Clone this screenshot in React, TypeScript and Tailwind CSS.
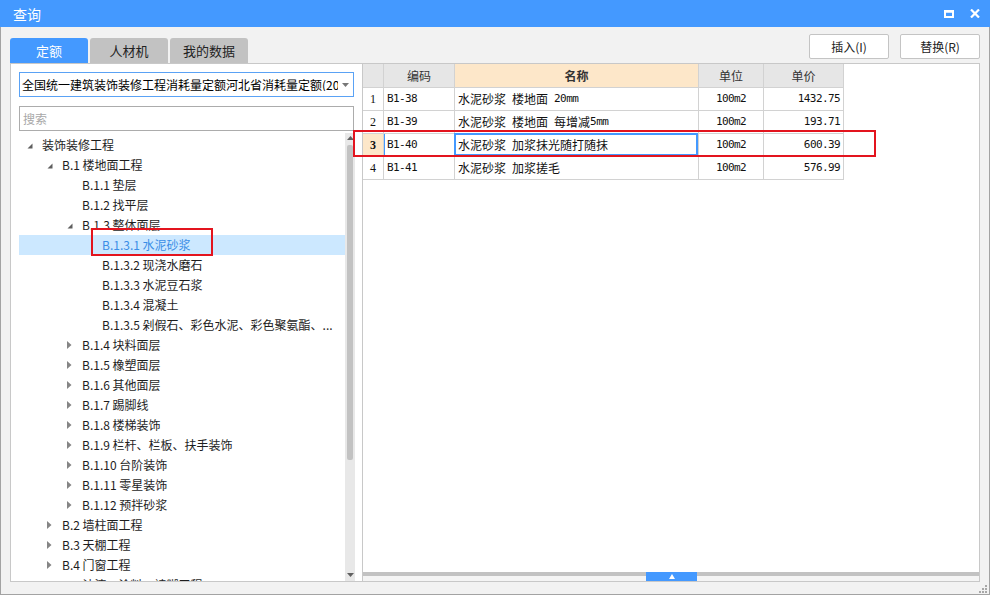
import React from "react";

type Node = { l: number; t: string; a?: "open" | "closed"; sel?: boolean };

const tree: Node[] = [
  { l: 0, t: "装饰装修工程", a: "open" },
  { l: 1, t: "B.1 楼地面工程", a: "open" },
  { l: 2, t: "B.1.1 垫层" },
  { l: 2, t: "B.1.2 找平层" },
  { l: 2, t: "B.1.3 整体面层", a: "open" },
  { l: 3, t: "B.1.3.1 水泥砂浆", sel: true },
  { l: 3, t: "B.1.3.2 现浇水磨石" },
  { l: 3, t: "B.1.3.3 水泥豆石浆" },
  { l: 3, t: "B.1.3.4 混凝土" },
  { l: 3, t: "B.1.3.5 剁假石、彩色水泥、彩色聚氨酯、..." },
  { l: 2, t: "B.1.4 块料面层", a: "closed" },
  { l: 2, t: "B.1.5 橡塑面层", a: "closed" },
  { l: 2, t: "B.1.6 其他面层", a: "closed" },
  { l: 2, t: "B.1.7 踢脚线", a: "closed" },
  { l: 2, t: "B.1.8 楼梯装饰", a: "closed" },
  { l: 2, t: "B.1.9 栏杆、栏板、扶手装饰", a: "closed" },
  { l: 2, t: "B.1.10 台阶装饰", a: "closed" },
  { l: 2, t: "B.1.11 零星装饰", a: "closed" },
  { l: 2, t: "B.1.12 预拌砂浆", a: "closed" },
  { l: 1, t: "B.2 墙柱面工程", a: "closed" },
  { l: 1, t: "B.3 天棚工程", a: "closed" },
  { l: 1, t: "B.4 门窗工程", a: "closed" },
  { l: 1, t: "B.5 油漆、涂料、裱糊工程", a: "closed" },
];

const rows = [
  { n: "1", c: "B1-38", name: "水泥砂浆 楼地面 20mm", u: "100m2", p: "1432.75" },
  { n: "2", c: "B1-39", name: "水泥砂浆 楼地面 每增减5mm", u: "100m2", p: "193.71" },
  { n: "3", c: "B1-40", name: "水泥砂浆 加浆抹光随打随抹", u: "100m2", p: "600.39", sel: true },
  { n: "4", c: "B1-41", name: "水泥砂浆 加浆搓毛", u: "100m2", p: "576.99" },
];

const padL = ["pl-[8px]", "pl-[28px]", "pl-[48px]", "pl-[68px]"];

function Mixed({ text }: { text: string }) {
  const parts = text.split(/([\u4e00-\u9fff]+)/).filter(Boolean);
  return (
    <>
      {parts.map((p, i) =>
        /[\u4e00-\u9fff]/.test(p) ? (
          <span key={i} className="font-['Noto_Sans_CJK_SC',sans-serif] text-[12px]">
            {p}
          </span>
        ) : (
          <span key={i} className="font-['DejaVu_Sans_Mono',monospace] text-[11px] tracking-[-0.6px] whitespace-pre">
            {p}
          </span>
        )
      )}
    </>
  );
}

function Arrow({ a }: { a?: "open" | "closed" }) {
  if (a === "open")
    return (
      <svg width="6" height="6" viewBox="0 0 6 6" className="mt-[1px]">
        <polygon points="5.5,0.5 5.5,5.5 0.5,5.5" fill="#5e5e5e" />
      </svg>
    );
  if (a === "closed")
    return (
      <svg width="5" height="8" viewBox="0 0 5 8">
        <polygon points="0,0 4.5,4 0,8" fill="#858585" />
      </svg>
    );
  return null;
}

export default function App() {
  return (
    <div className="relative w-[993px] h-[601px] bg-white overflow-hidden font-['Noto_Sans_CJK_SC',sans-serif] text-[12px] text-[#1e1e1e]">
      <div className="w-[990px] h-[595px] flex flex-col">
        {/* title bar */}
        <div className="h-[27px] bg-[#4499ff] flex items-center justify-between pl-[13px] pr-[10px] shrink-0">
          <span className="text-white text-[14px] leading-none">查询</span>
          <div className="flex items-center gap-[16px]">
            <svg width="10" height="8" viewBox="0 0 10 8">
              <rect x="1" y="1.5" width="8" height="5.5" fill="none" stroke="white" strokeWidth="2" />
              <rect x="0" y="0" width="10" height="2.5" fill="white" />
            </svg>
            <svg width="10" height="9" viewBox="0 0 10 9">
              <path d="M1 0.5 L9 8.5 M9 0.5 L1 8.5" stroke="white" strokeWidth="2.2" />
            </svg>
          </div>
        </div>

        {/* body */}
        <div className="flex-1 bg-[#f2f2f2] border-l border-r border-b border-[#a3a3a3] px-[9px] flex flex-col">
          {/* top row */}
          <div className="h-[36px] flex justify-between shrink-0">
            <div className="flex gap-[2px] mt-[11px]">
              <div className="w-[78px] h-[25px] rounded-t-[3px] bg-[#4499ff] text-white flex items-center justify-center text-[13px]">
                定额
              </div>
              <div className="w-[78px] h-[25px] rounded-t-[3px] bg-[#c2c2c2] text-[#222] flex items-center justify-center text-[13px]">
                人材机
              </div>
              <div className="w-[78px] h-[25px] rounded-t-[3px] bg-[#c2c2c2] text-[#222] flex items-center justify-center text-[13px]">
                我的数据
              </div>
            </div>
            <div className="flex gap-[11px] mt-[7px]">
              <div className="w-[80px] h-[25px] bg-white border border-[#c4c4c4] rounded-[2px] flex items-center justify-center text-[12px] text-[#222]">
                插入(I)
              </div>
              <div className="w-[80px] h-[25px] bg-white border border-[#c4c4c4] rounded-[2px] flex items-center justify-center text-[12px] text-[#222]">
                替换(R)
              </div>
            </div>
          </div>

          {/* panels */}
          <div className="h-[519px] flex shrink-0">
            {/* left panel */}
            <div className="w-[352px] h-full bg-white border-l border-t border-b border-[#c8c8c8] pl-[8px] pr-[7px] flex flex-col">
              <div className="mt-[8px] w-[335px] h-[25px] border border-[#5aa2f5] flex items-center pl-[2px] pr-[4px] shrink-0">
                <div className="w-[316px] overflow-hidden whitespace-nowrap text-[12px] text-black leading-none">
                  全国统一建筑装饰装修工程消耗量定额河北省消耗量定额(2012)
                </div>
                <div className="flex-1 flex justify-end">
                  <svg width="7" height="4" viewBox="0 0 7 4">
                    <polygon points="0,0 7,0 3.5,4" fill="#777" />
                  </svg>
                </div>
              </div>
              <div className="mt-[9px] w-[335px] h-[25px] border border-[#acacac] flex items-center pl-[3px] shrink-0 text-[12px] text-[#a8a8a8]">
                搜索
              </div>
              <div className="mt-[2px] flex-1 flex overflow-hidden">
                <div className="w-[326px] pt-[2px] overflow-hidden">
                  {tree.map((n, i) => (
                    <div
                      key={i}
                      className={`h-[20px] flex items-center whitespace-nowrap ${padL[n.l]} ${
                        n.sel ? "bg-[#cce8ff] text-[#3a8ee6]" : ""
                      }`}
                    >
                      <div className="w-[15px] h-[20px] flex items-center">
                        <Arrow a={n.a} />
                      </div>
                      <span className="leading-[20px]">{n.t}</span>
                    </div>
                  ))}
                </div>
                <div className="w-[10px] h-full bg-[#e8e8e8] flex flex-col items-center">
                  <svg width="7" height="4" viewBox="0 0 7 4" className="mt-[3px]">
                    <polygon points="3.5,0 7,4 0,4" fill="#606060" />
                  </svg>
                  <div className="mt-[5px] w-[6px] h-[315px] bg-[#c2c2c2] rounded-[2px]" />
                  <div className="flex-1" />
                  <svg width="7" height="4" viewBox="0 0 7 4" className="mb-[4px]">
                    <polygon points="0,0 7,0 3.5,4" fill="#606060" />
                  </svg>
                </div>
              </div>
            </div>

            {/* right panel */}
            <div className="flex-1 h-full bg-white border border-[#c8c8c8] flex flex-col">
              <div className="flex flex-col">
                {/* header */}
                <div className="flex h-[24px] text-[12px] text-[#333]">
                  <div className="w-[21px] bg-[#e6e6e6] border-r border-b border-[#d2d2d2]" />
                  <div className="w-[71px] bg-[#e6e6e6] border-r border-b border-[#d2d2d2] flex items-center justify-center">
                    编码
                  </div>
                  <div className="w-[244px] bg-[#fde7c9] border-r border-b border-[#d2d2d2] flex items-center justify-center font-bold">
                    名称
                  </div>
                  <div className="w-[65px] bg-[#e6e6e6] border-r border-b border-[#d2d2d2] flex items-center justify-center">
                    单位
                  </div>
                  <div className="w-[80px] bg-[#e6e6e6] border-r border-b border-[#d2d2d2] flex items-center justify-center">
                    单价
                  </div>
                </div>
                {rows.map((r) => (
                  <div key={r.n} className="flex h-[23px] text-[#111]">
                    <div
                      className={`w-[21px] border-r border-b border-[#d2d2d2] flex items-center justify-center font-['Liberation_Serif',serif] text-[12px] ${
                        r.sel ? "bg-[#fde7c9] font-bold" : ""
                      }`}
                    >
                      {r.n}
                    </div>
                    <div
                      className={`w-[71px] border-r border-b border-[#d2d2d2] flex items-center pl-[3px] ${
                        r.sel ? "shadow-[inset_1px_0_0_#4499ff]" : ""
                      }`}
                    >
                      <Mixed text={r.c} />
                    </div>
                    <div className="relative w-[244px] border-r border-b border-[#d2d2d2] flex items-center pl-[3px] whitespace-nowrap">
                      <Mixed text={r.name} />
                      {r.sel && <div className="absolute left-[-1px] top-[-1px] right-0 bottom-0 border-2 border-[#4499ff]" />}
                    </div>
                    <div className="w-[65px] border-r border-b border-[#d2d2d2] flex items-center justify-center">
                      <Mixed text={r.u} />
                    </div>
                    <div className="w-[80px] border-r border-b border-[#d2d2d2] flex items-center justify-end pr-[3px]">
                      <Mixed text={r.p} />
                    </div>
                  </div>
                ))}
              </div>
              <div className="flex-1" />
              <div className="relative h-[9px] shrink-0 bg-[#f4f4f4]">
                <div className="h-[4px] bg-[#c2c2c2]" />
                <div className="absolute left-[283px] top-0 w-[51px] h-[9px] bg-[#4499ff] flex items-center justify-center">
                  <svg width="6" height="5" viewBox="0 0 6 5">
                    <polygon points="3,0 6,5 0,5" fill="white" />
                  </svg>
                </div>
              </div>
            </div>
          </div>
          <div className="flex-1 relative">
            <svg width="8" height="8" viewBox="0 0 8 8" className="absolute right-[-7px] bottom-[1px]">
              <rect x="6" y="0" width="2" height="2" fill="#a8a8a8" />
              <rect x="3" y="3" width="2" height="2" fill="#a8a8a8" />
              <rect x="6" y="3" width="2" height="2" fill="#a8a8a8" />
              <rect x="0" y="6" width="2" height="2" fill="#a8a8a8" />
              <rect x="3" y="6" width="2" height="2" fill="#a8a8a8" />
              <rect x="6" y="6" width="2" height="2" fill="#a8a8a8" />
            </svg>
          </div>
        </div>
      </div>

      {/* red annotation boxes */}
      <div className="absolute left-[91px] top-[228px] w-[122px] h-[28px] border-2 border-[#e3141e] pointer-events-none" />
      <div className="absolute left-[353px] top-[130px] w-[523px] h-[27px] border-2 border-[#e3141e] pointer-events-none" />
    </div>
  );
}
